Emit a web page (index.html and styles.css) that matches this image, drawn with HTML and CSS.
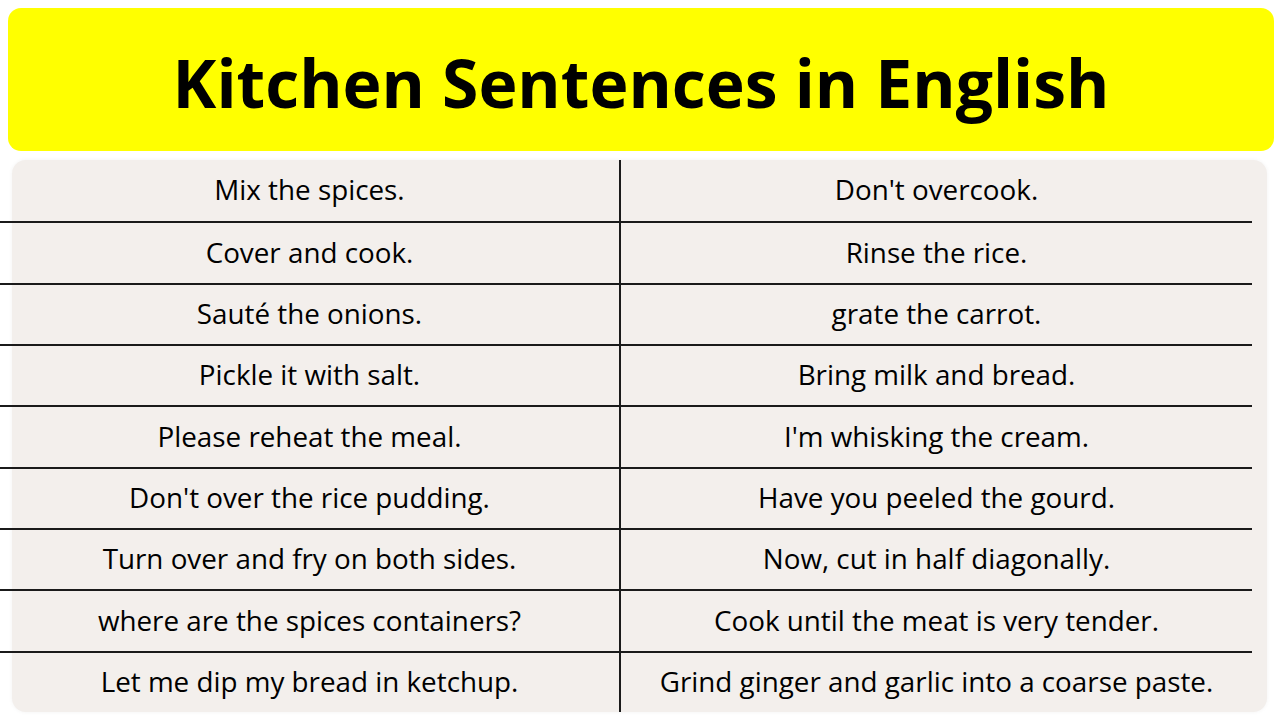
FILE: index.html
```html
<!DOCTYPE html>
<html lang="en">
<head>
<meta charset="utf-8">
<title>Kitchen Sentences in English</title>
<link rel="stylesheet" href="styles.css">
</head>
<body>
<header class="banner"><h1 class="title">Kitchen Sentences in English</h1></header>
<main class="panel">
  <div class="table">
    <div class="cell left">Mix the spices.</div><div class="cell">Don't overcook.</div>
    <div class="cell left line">Cover and cook.</div><div class="cell line">Rinse the rice.</div>
    <div class="cell left line">Sauté the onions.</div><div class="cell line">grate the carrot.</div>
    <div class="cell left line">Pickle it with salt.</div><div class="cell line">Bring milk and bread.</div>
    <div class="cell left line">Please reheat the meal.</div><div class="cell line">I'm whisking the cream.</div>
    <div class="cell left line">Don't over the rice pudding.</div><div class="cell line">Have you peeled the gourd.</div>
    <div class="cell left line">Turn over and fry on both sides.</div><div class="cell line">Now, cut in half diagonally.</div>
    <div class="cell left line">where are the spices containers?</div><div class="cell line">Cook until the meat is very tender.</div>
    <div class="cell left line">Let me dip my bread in ketchup.</div><div class="cell line">Grind ginger and garlic into a coarse paste.</div>
  </div>
</main>
</body>
</html>
```

FILE: styles.css
```css
html, body { margin: 0; padding: 0; background: #ffffff; }
body { width: 1280px; height: 720px; overflow: hidden; font-family: "Open Sans", "Noto Sans", sans-serif; color: #000; }
.banner {
  margin: 8px 6px 0 8px;
  height: 143px;
  background: #ffff00;
  border-radius: 13px;
  display: flex;
  align-items: center;
  justify-content: center;
}
.title {
  margin: 0;
  font-size: 66px;
  font-weight: 700;
  letter-spacing: 0;
  line-height: 1;
  padding-top: 4px;
}
.panel {
  margin: 9px 13px 0 12px;
  height: 552px;
  background: #f3efec;
  border-radius: 14px;
  box-shadow: 0 0 4px rgba(0,0,0,0.05);
}
.table {
  margin-left: -12px;
  width: 1252px;
  height: 552px;
  display: grid;
  grid-template-columns: 621px 1fr;
  grid-template-rows: repeat(9, 1fr);
}
.cell {
  display: flex;
  align-items: center;
  justify-content: center;
  font-size: 27.8px;
  line-height: 1;
  padding-bottom: 1px;
}
.left { border-right: 2px solid #1a1a1a; }
.line { border-top: 2px solid #1a1a1a; }
```
